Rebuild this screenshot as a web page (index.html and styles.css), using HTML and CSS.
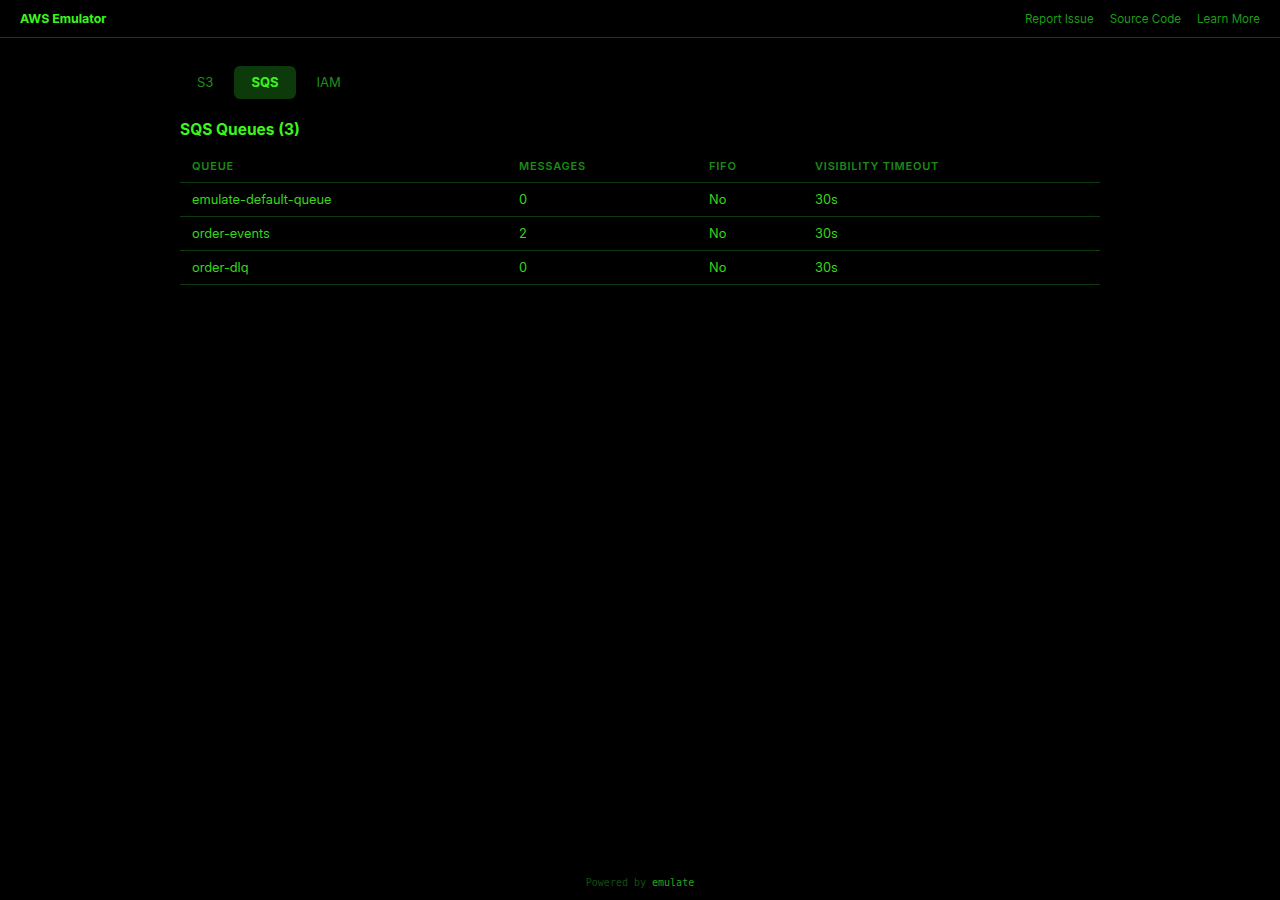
FILE: index.html
```html
<!DOCTYPE html>
<html lang="en">
<head>
    <meta charset="UTF-8">
    <meta name="viewport" content="width=device-width, initial-scale=1.0">
    <title>AWS Emulator</title>
    <link rel="stylesheet" href="styles.css">
</head>
<body>
    <!-- Top bar -->
    <header class="topbar">
        <a href="#" class="brand">AWS Emulator</a>
        <nav class="toplinks">
            <a href="#">Report Issue</a>
            <a href="#">Source Code</a>
            <a href="#">Learn More</a>
        </nav>
    </header>

    <!-- Main content -->
    <main class="content">
        <div class="tabs">
            <a href="#" class="tab">S3</a>
            <a href="#" class="tab active">SQS</a>
            <a href="#" class="tab">IAM</a>
        </div>

        <h2 class="section-title">SQS Queues (3)</h2>

        <table class="queues">
            <thead>
                <tr>
                    <th class="col-queue">Queue</th>
                    <th class="col-messages">Messages</th>
                    <th class="col-fifo">FIFO</th>
                    <th>Visibility Timeout</th>
                </tr>
            </thead>
            <tbody>
                <tr>
                    <td>emulate-default-queue</td>
                    <td>0</td>
                    <td>No</td>
                    <td>30s</td>
                </tr>
                <tr>
                    <td>order-events</td>
                    <td>2</td>
                    <td>No</td>
                    <td>30s</td>
                </tr>
                <tr>
                    <td>order-dlq</td>
                    <td>0</td>
                    <td>No</td>
                    <td>30s</td>
                </tr>
            </tbody>
        </table>
    </main>

    <footer class="footer">
        Powered by <a href="#">emulate</a>
    </footer>
</body>
</html>
```

FILE: styles.css
```css
/* General */
html, body {
    height: 100%;
}

body {
    margin: 0;
    background-color: #000;
    color: #33e01a;
    font-family: Inter, "Noto Sans", sans-serif;
    display: flex;
    flex-direction: column;
}

a {
    text-decoration: none;
    color: inherit;
}

/* Top bar */
.topbar {
    display: flex;
    align-items: center;
    justify-content: space-between;
    height: 37px;
    padding: 0 20px;
    border-bottom: 1px solid #113d11;
}

.brand {
    color: #3cf51c;
    font-size: 12.4px;
    font-weight: 700;
}

.toplinks {
    display: flex;
    gap: 16px;
}

.toplinks a {
    color: #1f9a1a;
    font-size: 11.6px;
}

/* Main content */
.content {
    flex: 1;
    width: 920px;
    margin: 0 auto;
    padding-top: 28px;
}

.tabs {
    display: flex;
    gap: 4px;
}

.tab {
    padding: 0 17px;
    height: 33px;
    line-height: 33px;
    font-size: 13px;
    color: #1f8f1a;
    border-radius: 6px;
}

.tab.active {
    background-color: #0c3a0a;
    color: #3cf51c;
    font-weight: 700;
}

.section-title {
    margin: 21px 0 11px;
    font-size: 15.5px;
    line-height: 19px;
    font-weight: 700;
    color: #3cf51c;
}

/* Queue table */
.queues {
    width: 100%;
    border-collapse: collapse;
}

.queues th,
.queues td {
    text-align: left;
    padding: 0 12px;
    border-bottom: 1px solid #0f3a0d;
}

.queues th {
    height: 32px;
    font-size: 11px;
    font-weight: 600;
    letter-spacing: 0.8px;
    text-transform: uppercase;
    color: #1d8a18;
}

.queues td {
    height: 33px;
    font-size: 12.8px;
    color: #33d81a;
}

.col-queue { width: 303px; }
.col-messages { width: 166px; }
.col-fifo { width: 82px; }

/* Footer */
.footer {
    text-align: center;
    padding: 0 0 12px;
    font-family: "DejaVu Sans Mono", monospace;
    font-size: 10px;
    color: #144d12;
}

.footer a {
    color: #2aa022;
}
```
